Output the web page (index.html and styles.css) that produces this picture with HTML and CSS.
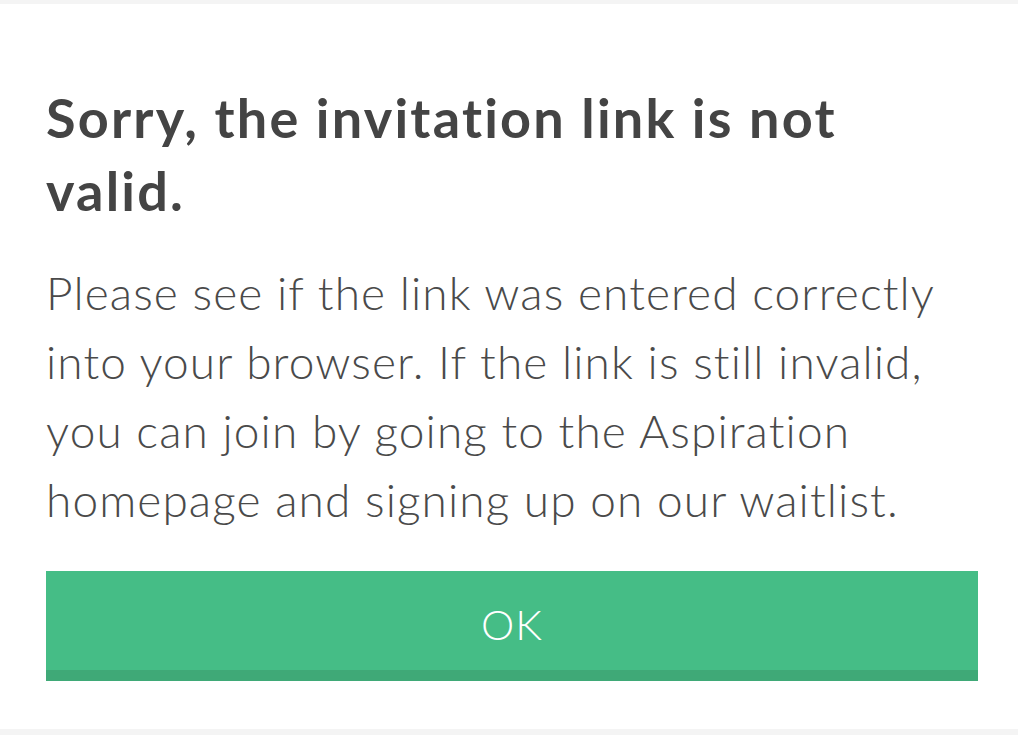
FILE: index.html
```html
<!DOCTYPE html>
<html>
<head>
<meta charset="utf-8">
<link rel="stylesheet" href="styles.css">
</head>
<body>
<div class="card">
  <h1 class="title">Sorry, the invitation link is not valid.</h1>
  <p class="message">Please see if the link was entered correctly into your browser. If the link is still invalid, you can join by going to the Aspiration homepage and signing up on our waitlist.</p>
  <button class="ok-button">OK</button>
</div>
</body>
</html>
```
FILE: styles.css
```css
html, body {
  margin: 0;
  padding: 0;
  background: #f4f4f4;
  height: 735px;
  overflow: hidden;
}
body {
  padding-top: 4px;
  box-sizing: border-box;
}
.card {
  background: #ffffff;
  height: 725px;
  box-sizing: border-box;
  padding: 77px 40px 0 46px;
  font-family: Lato, "Liberation Sans", sans-serif;
  color: #464646;
}
.title {
  margin: 0;
  max-width: 880px;
  font-size: 54px;
  font-weight: 700;
  line-height: 73px;
  letter-spacing: 2.2px;
  color: #444444;
}
.message {
  margin: 31px 0 0 0;
  font-size: 46px;
  font-weight: 300;
  line-height: 69px;
  letter-spacing: 1.1px;
  color: #4a4a4a;
}
.ok-button {
  display: block;
  width: 100%;
  margin-top: 37px;
  height: 110px;
  border: none;
  border-bottom: 11px solid #3fa977;
  background: #45bd86;
  color: #ffffff;
  font-family: Lato, "Liberation Sans", sans-serif;
  font-size: 42px;
  font-weight: 300;
  letter-spacing: 1px;
  padding: 6px 0 0 0;
}
```
